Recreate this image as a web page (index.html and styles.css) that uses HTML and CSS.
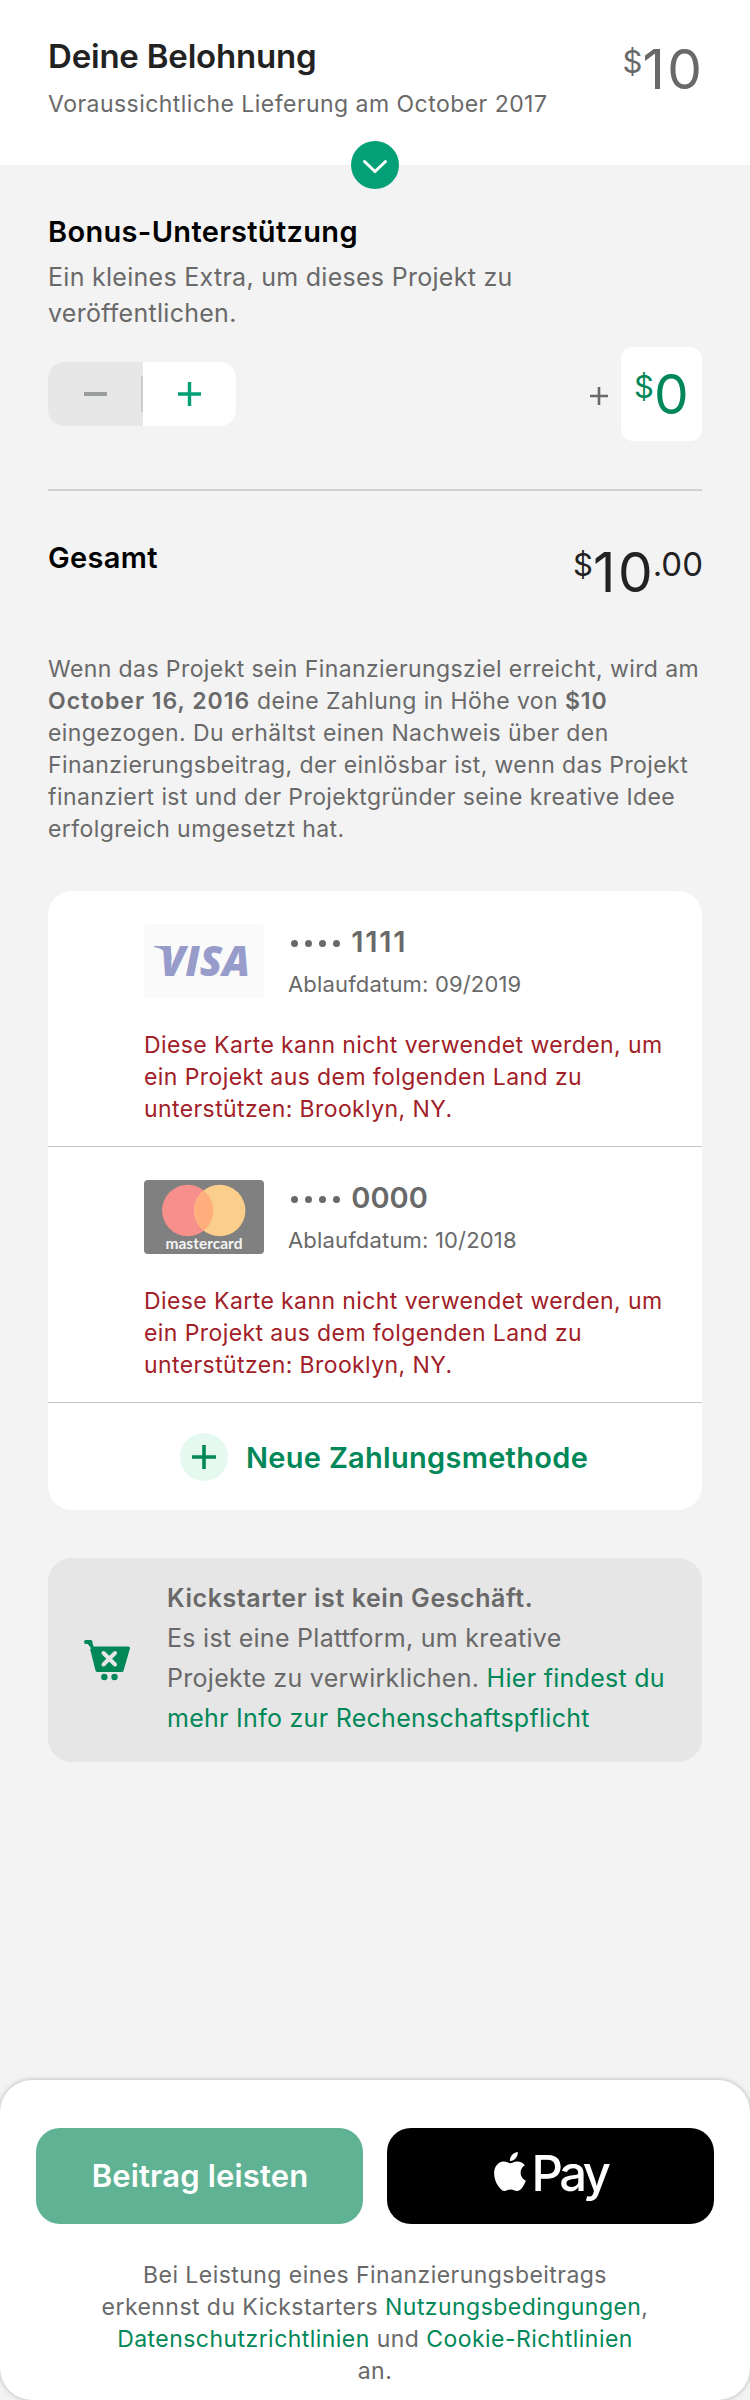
FILE: index.html
```html
<!DOCTYPE html>
<html lang="de">
<head>
<meta charset="utf-8">
<title>Deine Belohnung</title>
<link rel="stylesheet" href="styles.css">
</head>
<body>
<header class="reward">
  <div>
    <h1 class="reward-title">Deine Belohnung</h1>
    <p class="reward-sub">Voraussichtliche Lieferung am October 2017</p>
  </div>
  <div class="amount amount-grey"><span class="cur">$</span><span class="num">10</span></div>
  <svg class="toggle" viewBox="0 0 48 48"><circle cx="24" cy="24" r="24" fill="#03a078"/><path d="M13.500 20.500L24 30.500l10.500-10" fill="none" stroke="#fff" stroke-width="3" stroke-linecap="round"/></svg>
</header>

<main class="content">
  <section class="bonus">
    <h2 class="heading">Bonus-Unterstützung</h2>
    <p class="bonus-text">Ein kleines Extra, um dieses Projekt zu veröffentlichen.</p>
    <div class="bonus-row">
      <div class="stepper">
        <div class="step step-off"><svg width="24" height="24"><path d="M0 12h23" stroke="#999e9c" stroke-width="4"/></svg></div>
        <div class="step"><svg width="24" height="24"><path d="M0 12h23M11.500 0v24" stroke="#03a078" stroke-width="3.400"/></svg></div>
      </div>
      <div class="bonus-value">
        <svg width="18" height="18" class="small-plus"><path d="M0 9h18M9 0v18" stroke="#696969" stroke-width="2.600"/></svg>
        <div class="value-box"><div class="amount amount-green"><span class="cur">$</span><span class="num">0</span></div></div>
      </div>
    </div>
  </section>

  <section class="total">
    <h2 class="heading">Gesamt</h2>
    <div class="amount amount-dark"><span class="cur">$</span><span class="num">10</span><span class="cents">.00</span></div>
  </section>

  <p class="explain">Wenn das Projekt sein Finanzierungsziel erreicht, wird am <b>October 16, 2016</b> deine Zahlung in Höhe von <b>$10</b><br>eingezogen. Du erhältst einen Nachweis über den<br>Finanzierungsbeitrag, der einlösbar ist, wenn das Projekt<br>finanziert ist und der Projektgründer seine kreative Idee<br>erfolgreich umgesetzt hat.</p>

  <section class="cards">
    <article class="card">
      <div class="card-head">
        <svg class="card-logo" viewBox="0 0 120 74"><rect width="120" height="74" rx="4" fill="#fafafa"/><path d="M10 22H26L28 36Q22 25 10 23Z" fill="#979ccb"/><text class="visa" x="16" y="52" textLength="90" lengthAdjust="spacingAndGlyphs">VISA</text></svg>
        <div>
          <div class="card-number"><span class="dots"><i></i><i></i><i></i><i></i></span><span class="ones">1111</span></div>
          <div class="card-exp">Ablaufdatum: 09/2019</div>
        </div>
      </div>
      <p class="card-error">Diese Karte kann nicht verwendet werden, um<br>ein Projekt aus dem folgenden Land zu<br>unterstützen: Brooklyn, NY.</p>
    </article>
    <article class="card">
      <div class="card-head">
        <svg class="card-logo" viewBox="0 0 120 74"><rect width="120" height="74" rx="4" fill="#808080"/><circle cx="43.800" cy="30.500" r="25.700" fill="#f7908d"/><circle cx="75.700" cy="30.500" r="25.700" fill="#fbce8c"/><path d="M59.750 10.400a25.700 25.700 0 0 1 0 40.200a25.700 25.700 0 0 1 0-40.200z" fill="#ffae7c"/><text class="mc" x="21.500" y="69" textLength="77" lengthAdjust="spacingAndGlyphs">mastercard</text></svg>
        <div>
          <div class="card-number"><span class="dots"><i></i><i></i><i></i><i></i></span><span>0000</span></div>
          <div class="card-exp">Ablaufdatum: 10/2018</div>
        </div>
      </div>
      <p class="card-error">Diese Karte kann nicht verwendet werden, um<br>ein Projekt aus dem folgenden Land zu<br>unterstützen: Brooklyn, NY.</p>
    </article>
    <div class="add">
      <svg width="48" height="48"><circle cx="24" cy="24" r="24" fill="#e6f9f1"/><path d="M12 24h24M24 12v24" stroke="#028858" stroke-width="3.600"/></svg>
      <span class="add-label">Neue Zahlungsmethode</span>
    </div>
  </section>

  <aside class="notice">
    <svg class="cart" width="47" height="41" viewBox="0 0 47 41"><path d="M2 2H6.500L8.500 8H44.500L38 30.500H13L7.500 8.500" fill="#028858" stroke="#028858" stroke-width="3" stroke-linejoin="round"/><path d="M2 2H6.500" stroke="#028858" stroke-width="4" stroke-linecap="round"/><path d="M19.500 13l11.500 11.500M31 13L19.500 24.500" stroke="#e6e6e6" stroke-width="4" stroke-linecap="round"/><circle cx="20.300" cy="37" r="3.200" fill="#028858"/><circle cx="30.500" cy="37" r="3.200" fill="#028858"/></svg>
    <p class="notice-text"><b>Kickstarter ist kein Geschäft.</b><br>Es ist eine Plattform, um kreative<br>Projekte zu verwirklichen. <a>Hier findest du<br>mehr Info zur Rechenschaftspflicht</a></p>
  </aside>
</main>

<footer class="footer">
  <div class="buttons">
    <button class="btn btn-pledge">Beitrag leisten</button>
    <button class="btn btn-pay"><svg width="32" height="39" viewBox="2.200 0 19.600 24"><path fill="#fff" d="M12.152 6.896c-.948 0-2.415-1.078-3.960-1.040-2.040.027-3.910 1.183-4.961 3.014-2.117 3.675-.546 9.103 1.519 12.090 1.013 1.454 2.208 3.090 3.792 3.039 1.520-.065 2.090-.987 3.935-.987 1.831 0 2.350.987 3.960.948 1.637-.026 2.676-1.480 3.676-2.948 1.156-1.688 1.636-3.325 1.662-3.415-.039-.013-3.182-1.221-3.220-4.857-.026-3.040 2.480-4.494 2.597-4.559-1.429-2.090-3.623-2.324-4.390-2.376-2-.156-3.675 1.090-4.610 1.090zM15.530 3.830c.843-1.012 1.400-2.427 1.245-3.830-1.207.052-2.662.805-3.532 1.818-.780.896-1.454 2.338-1.273 3.714 1.338.104 2.715-.688 3.559-1.701"/></svg><span class="pay">Pay</span></button>
  </div>
  <p class="terms">Bei Leistung eines Finanzierungsbeitrags<br>erkennst du Kickstarters <a>Nutzungsbedingungen</a>,<br><a>Datenschutzrichtlinien</a> und <a>Cookie-Richtlinien</a><br>an.</p>
</footer>
</body>
</html>
```
FILE: styles.css
```css
* { box-sizing: border-box; }
body { margin: 0; background: #f3f3f3; color: #696969; font-family: Inter, "Liberation Sans", sans-serif; font-size: 23px; line-height: 32px; letter-spacing: .43px; }
h1, h2, p { margin: 0; }
a { color: #028858; }
b { font-weight: 600; }
svg { display: block; flex: none; }

.reward { position: relative; height: 165px; padding: 36px 48px 0; background: #fff; display: flex; justify-content: space-between; }
.reward-title { font-size: 33px; line-height: 40px; font-weight: 600; letter-spacing: -.2px; color: #222; }
.reward-sub { margin-top: 12px; letter-spacing: .46px; }
.toggle { position: absolute; width: 48px; height: 48px; left: 351px; bottom: -24px; }

.amount { display: flex; align-items: flex-start; letter-spacing: 0; padding-top: 3px; }
.amount .cur { font-size: 31px; line-height: 46px; width: 20px; }
.amount .num { font-size: 55px; line-height: 60px; letter-spacing: 2.500px; margin-right: -2.500px; }
.amount .cents { font-size: 33px; line-height: 45px; letter-spacing: 0; margin-right: -1px; }
.amount-grey { color: #696969; }
.amount-green { color: #028858; }
.amount-dark { color: #222; }

.content { padding: 48px 48px 0; }
.heading { padding-top: 1px; height: 36px; font-size: 29px; line-height: 36px; font-weight: 600; letter-spacing: .33px; color: #000; }
.bonus { padding-bottom: 48px; border-bottom: 2px solid #d1d1d1; }
.bonus-text { width: 540px; margin-top: 10px; font-size: 25px; line-height: 36px; letter-spacing: .28px; }
.bonus-row { margin-top: 16px; height: 94px; display: flex; justify-content: space-between; align-items: center; }
.stepper { width: 188px; height: 64px; border-radius: 16px; overflow: hidden; display: flex; background: #fff; }
.step { flex: 1; display: flex; align-items: center; justify-content: center; }
.step-off { background: linear-gradient(#cdcdcd, #cdcdcd) right center / 2px 36px no-repeat #e7e7e7; flex: 0 0 95px; }
.bonus-value { display: flex; align-items: center; gap: 13px; }
.small-plus { margin-top: 4px; }
.value-box { width: 81px; height: 94px; border-radius: 12px; background: #fff; padding: 14px 0 0 13px; }

.total { margin-top: 48px; height: 114px; display: flex; justify-content: space-between; }
.explain { margin-right: -4px; letter-spacing: .41px; }
.explain b { letter-spacing: 1px; }

.cards { margin-top: 46px; background: #fff; border-radius: 24px; }
.card { height: 256px; padding: 33px 24px 0 96px; border-bottom: 1px solid #c4c4c4; }
.card-head { display: flex; gap: 24px; height: 76px; }
.card-logo { width: 120px; height: 74px; }
.visa { font: italic 800 42px "Open Sans"; letter-spacing: 0; fill: #979ccb; }
.mc { font: 700 15px Lato; letter-spacing: 0; fill: #f4f4f4; }
.card-number { height: 35px; line-height: 36px; font-size: 29px; font-weight: 600; letter-spacing: 0; display: flex; align-items: center; }
.dots { display: flex; gap: 6.600px; margin: 4px 11px 0 3px; }
.dots i { width: 7.400px; height: 7.400px; border-radius: 50%; background: #696969; }
.ones { letter-spacing: 1.700px; }
.card-exp { margin-top: 9px; font-size: 22px; letter-spacing: .17px; }
.card-error { margin-top: 29px; color: #a12027; white-space: nowrap; letter-spacing: .41px; }
.add { height: 107px; padding-left: 132px; display: flex; align-items: center; gap: 18px; color: #028858; font-size: 29px; font-weight: 600; letter-spacing: .3px; }
.add-label { padding-top: 3px; }

.notice { margin-top: 48px; height: 204px; padding: 20px 0 0 36px; border-radius: 24px; background: #e6e6e6; display: flex; gap: 36px; }
.cart { margin-top: 62px; }
.notice-text { font-size: 25px; line-height: 40px; letter-spacing: .28px; }
.notice-text b { letter-spacing: .57px; }

.footer { margin-top: 318px; height: 320px; padding: 48px 36px 0; background: #fff; border-radius: 32px; box-shadow: 0 0 5px rgba(0, 0, 0, .28); }
.buttons { display: grid; grid-template-columns: 1fr 1fr; gap: 24px; }
.btn { height: 96px; border: 0; padding: 0; border-radius: 24px; color: #fff; font-family: inherit; display: flex; align-items: center; justify-content: center; }
.btn-pledge { background: #5fb394; font-size: 31px; font-weight: 600; letter-spacing: .15px; padding: 0 0 2px 1px; }
.btn-pay { background: #000; font-size: 49px; font-weight: 500; letter-spacing: -3.500px; gap: 6px; padding-bottom: 9px; }
.pay { padding-top: 3px; }
.terms { margin-top: 35px; text-align: center; letter-spacing: .45px; }
```
